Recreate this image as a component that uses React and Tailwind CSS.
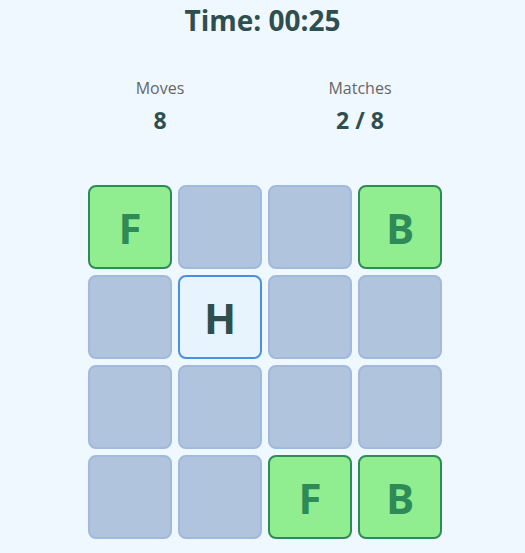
import React from 'react';

const cards = [
    { letter: 'F', state: 'matched' },
    { letter: '', state: 'hidden' },
    { letter: '', state: 'hidden' },
    { letter: 'B', state: 'matched' },
    { letter: '', state: 'hidden' },
    { letter: 'H', state: 'flipped' },
    { letter: '', state: 'hidden' },
    { letter: '', state: 'hidden' },
    { letter: '', state: 'hidden' },
    { letter: '', state: 'hidden' },
    { letter: '', state: 'hidden' },
    { letter: '', state: 'hidden' },
    { letter: '', state: 'hidden' },
    { letter: '', state: 'hidden' },
    { letter: 'F', state: 'matched' },
    { letter: 'B', state: 'matched' },
];

const cardStyles = {
    hidden: 'bg-[#b0c4de] border-[#a0b9dc]',
    matched: 'bg-[#90ee90] border-[#2e8b57] text-[#2e8b57]',
    flipped: 'bg-[#e8f4fd] border-[#4a90e2] text-[#2f4f4f]',
};

const App = () => {
    return (
        <div className="min-h-screen bg-[#f0f8ff] font-['Open_Sans',sans-serif] flex flex-col items-center">
            <h1 className="text-[28px] leading-[40px] font-bold text-[#2f4f4f]">Time: 00:25</h1>

            {/* Stats */}
            <div className="flex justify-center gap-[108px] mt-[37px] mr-[5px]">
                <div className="flex flex-col items-center w-[92px]">
                    <p className="text-[16px] leading-[22px] text-[#666]">Moves</p>
                    <p className="text-[23px] leading-[30px] font-bold text-[#2f4f4f] mt-[6px]">8</p>
                </div>
                <div className="flex flex-col items-center w-[92px]">
                    <p className="text-[16px] leading-[22px] text-[#666]">Matches</p>
                    <p className="text-[23px] leading-[30px] font-bold text-[#2f4f4f] mt-[6px]">2 / 8</p>
                </div>
            </div>

            {/* Board */}
            <div className="grid grid-cols-4 gap-[6px] mt-[50px] ml-[5px]">
                {cards.map((c, i) => (
                    <div
                        key={i}
                        className={`w-[84px] h-[84px] rounded-[8px] border-2 flex items-center justify-center text-[42px] font-bold ${cardStyles[c.state]}`}
                    >
                        {c.letter}
                    </div>
                ))}
            </div>
        </div>
    );
};

export default App;
